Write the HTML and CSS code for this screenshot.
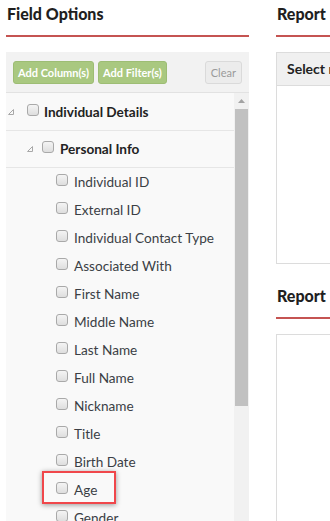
FILE: index.html
```html
<!DOCTYPE html>
<html lang="en">
<head>
    <meta charset="UTF-8">
    <meta name="viewport" content="width=device-width, initial-scale=1.0">
    <title>Report Builder</title>
    <link rel="stylesheet" href="styles.css">
</head>
<body>
    <div class="page">
        <div class="column left">
            <h2 class="section-title">Field Options</h2>
            <div class="panel">
                <div class="toolbar">
                    <button class="btn green">Add Column(s)</button>
                    <button class="btn green">Add Filter(s)</button>
                    <button class="btn clear">Clear</button>
                </div>
                <div class="tree-wrap">
                    <ul class="tree">
                        <li class="node level1">
                            <span class="arrow"><svg width="6" height="6" viewBox="0 0 6 6"><polygon points="5.5,0.5 5.5,5.5 0.5,5.5" fill="none" stroke="#a8a8a8" stroke-width="1"/></svg></span>
                            <span class="check"></span>
                            <span class="label">Individual Details</span>
                        </li>
                        <li class="node level2">
                            <span class="arrow"><svg width="6" height="6" viewBox="0 0 6 6"><polygon points="5.5,0.5 5.5,5.5 0.5,5.5" fill="none" stroke="#a8a8a8" stroke-width="1"/></svg></span>
                            <span class="check"></span>
                            <span class="label">Personal Info</span>
                        </li>
                        <li class="leaf"><span class="check"></span><span class="label">Individual ID</span></li>
                        <li class="leaf"><span class="check"></span><span class="label">External ID</span></li>
                        <li class="leaf"><span class="check"></span><span class="label">Individual Contact Type</span></li>
                        <li class="leaf"><span class="check"></span><span class="label">Associated With</span></li>
                        <li class="leaf"><span class="check"></span><span class="label">First Name</span></li>
                        <li class="leaf"><span class="check"></span><span class="label">Middle Name</span></li>
                        <li class="leaf"><span class="check"></span><span class="label">Last Name</span></li>
                        <li class="leaf"><span class="check"></span><span class="label">Full Name</span></li>
                        <li class="leaf"><span class="check"></span><span class="label">Nickname</span></li>
                        <li class="leaf"><span class="check"></span><span class="label">Title</span></li>
                        <li class="leaf"><span class="check"></span><span class="label">Birth Date</span></li>
                        <li class="leaf highlight"><span class="check"></span><span class="label">Age</span></li>
                        <li class="leaf"><span class="check"></span><span class="label">Gender</span></li>
                    </ul>
                    <div class="scrollbar">
                        <div class="scroll-up"><svg width="7" height="4" viewBox="0 0 7 4"><polygon points="0,4 3.5,0 7,4" fill="#a3a3a3"/></svg></div>
                        <div class="scroll-thumb"></div>
                    </div>
                </div>
            </div>
        </div>
        <div class="column right">
            <h2 class="section-title">Report</h2>
            <div class="box columns-box">
                <div class="box-header">Select r</div>
            </div>
            <h2 class="section-title">Report</h2>
            <div class="box filters-box"></div>
        </div>
    </div>
</body>
</html>
```

FILE: styles.css
```css
body {
    margin: 0;
    font-family: 'Lato', 'Open Sans', sans-serif;
    color: #333;
    background: #fff;
    overflow: hidden;
}
.page {
    display: flex;
    gap: 27px;
    padding: 0 6px;
    width: 600px;
}
.column.left {
    width: 243px;
    flex-shrink: 0;
}
.column.right {
    width: 300px;
    flex-shrink: 0;
}
.section-title {
    margin: 0;
    padding-top: 4px;
    height: 31px;
    font-size: 16px;
    font-weight: 900;
    color: #1f1f1f;
    border-bottom: 2px solid #c55452;
    box-sizing: content-box;
    line-height: 20px;
    padding-left: 1px;
}
.panel {
    margin-top: 15px;
    background: #f9f9f9;
}
.toolbar {
    display: flex;
    align-items: center;
    gap: 4px;
    height: 40px;
    padding: 0 7px;
    background: #f2f2f2;
    border-bottom: 1px solid #e2e2e2;
}
.btn {
    font-family: inherit;
    font-size: 11px;
    font-weight: bold;
    height: 23px;
    padding: 0 4px;
    border-radius: 3px;
    cursor: pointer;
}
.btn.green {
    background: #a9c880;
    border: 1px solid #9dbd74;
    color: #fff;
}
.btn.clear {
    margin-left: auto;
    background: #ececec;
    border: 1px solid #dadada;
    color: #9a9a9a;
    font-weight: normal;
    padding: 0 5px;
}
.tree-wrap {
    display: flex;
}
.tree {
    flex: 1;
    list-style: none;
    margin: 0;
    padding: 1px 0 0;
}
.tree li {
    display: flex;
    align-items: center;
    font-size: 13.6px;
}
.node {
    height: 36px;
    border-bottom: 1px solid #e6e6e6;
}
.node .label {
    font-weight: bold;
    color: #222;
}
.level1 { padding-left: 2px; }
.level1 .arrow { margin-right: 13px; }
.level1 .check { margin-right: 5px; }
.level2 { padding-left: 21px; }
.level2 .arrow { margin-right: 9px; }
.arrow {
    width: 6px;
    height: 6px;
    display: flex;
}
.arrow svg { display: block; }
.check {
    width: 10px;
    height: 10px;
    border: 1px solid #a9a9a9;
    border-radius: 3px;
    background: linear-gradient(#f4f4f4, #dedede);
    margin-right: 6px;
    margin-top: -4px;
    flex-shrink: 0;
}
.leaf {
    height: 28px;
    padding-left: 50px;
}
.leaf .label {
    color: #3b3f45;
}
.highlight {
    position: relative;
}
.highlight::after {
    content: "";
    position: absolute;
    left: 36px;
    top: -5px;
    width: 70px;
    height: 29px;
    border: 2px solid #f0474b;
    box-shadow: 0 1px 5px rgba(0, 0, 0, 0.4);
}
.scrollbar {
    width: 15px;
    background: #f1f1f1;
    display: flex;
    flex-direction: column;
    align-items: center;
}
.scroll-up {
    height: 16px;
    display: flex;
    align-items: center;
    justify-content: center;
}
.scroll-thumb {
    width: 13px;
    height: 297px;
    background: #c1c1c1;
}
.box {
    margin-top: 15px;
    border: 1px solid #dcdcdc;
    background: #fff;
}
.columns-box {
    height: 210px;
    margin-bottom: 18px;
}
.box-header {
    height: 32px;
    line-height: 32px;
    padding-left: 10px;
    background: #f0f0f0;
    border-bottom: 1px solid #dcdcdc;
    font-size: 14px;
    font-weight: bold;
    color: #222;
    white-space: nowrap;
}
.filters-box {
    height: 300px;
}
```
